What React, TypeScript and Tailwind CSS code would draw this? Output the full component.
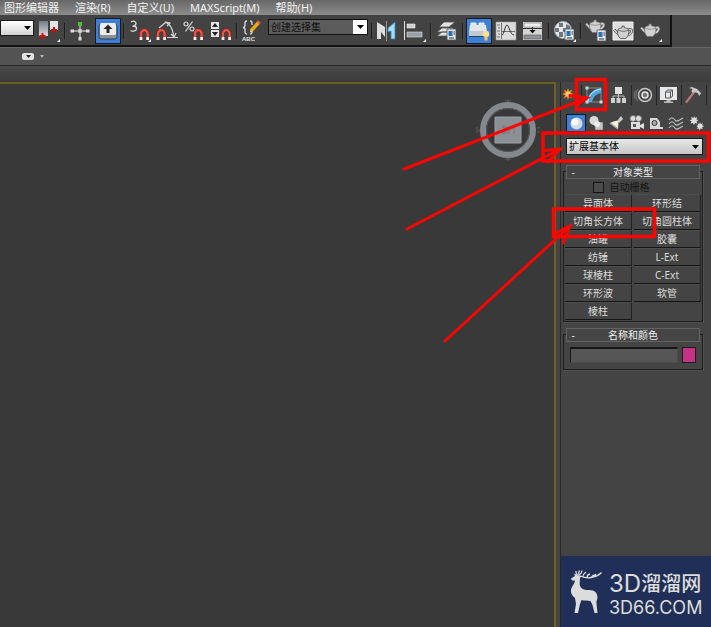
import type { ReactNode } from 'react'

interface ToolProps {
  label: string
  active?: boolean
  flyout?: boolean
  children: ReactNode
}

const menus = ['图形编辑器', '渲染(R)', '自定义(U)', 'MAXScript(M)', '帮助(H)']

const primitives = [
  '异面体',
  '环形结',
  '切角长方体',
  '切角圆柱体',
  '油罐',
  '胶囊',
  '纺锤',
  'L-Ext',
  '球棱柱',
  'C-Ext',
  '环形波',
  '软管',
  '棱柱',
]

function Tool({ label, active, flyout, children }: ToolProps) {
  return (
    <button
      type="button"
      aria-label={label}
      className={`h-6 w-6 shrink-0 ${active ? 'bg-[#3d80d6] outline outline-1 outline-[#171b22]' : ''}`}
    >
      <svg viewBox="0 0 24 24" className="block h-6 w-6" fill="none">
        {children}
        {flyout && <path d="M23 20v3h-3z" fill="#fff" />}
      </svg>
    </button>
  )
}

function Separator() {
  return <span className="h-4 w-[2px] shrink-0 border-l border-[#1c1c1c] bg-[#4c4c4c]" />
}

function Magnet({ x, y }: { x: number; y: number }) {
  return (
    <g transform={`translate(${x} ${y})`}>
      <path d="M1 12V5.500a3.300 3.300 0 0 1 6.600 0V12" stroke="#8a1d17" strokeWidth="3.400" />
      <path d="M1 9V5.500a3.300 3.300 0 0 1 6.600 0V9" stroke="#e8564c" strokeWidth="2.200" />
      <path d="M1 9v3M7.600 9v3" stroke="#f4f4f4" strokeWidth="2.800" />
    </g>
  )
}

function Teapot({ x, y, fill = '#d2d2d2', line = '#777' }: { x: number; y: number; fill?: string; line?: string }) {
  return (
    <g transform={`translate(${x} ${y}) scale(1.120)`}>
      <path d="M4.500 8 1 4.200M13.500 4.500c4-2 4.500 2 0 4.500" stroke={line} strokeWidth="2.400" />
      <path d="M4.500 8 1 4.200M13.500 4.500c4-2 4.500 2 0 4.500" stroke={fill} strokeWidth="1.300" />
      <path
        d="M4.500 3.800C6 2.800 7.300 2.600 8 2.500V1h2v1.500c1.500.1 3 .6 4 1.500.8 3.300-.5 6-2.500 8h-5C4.300 10 3.500 7 4.500 3.800z"
        fill={fill}
        stroke={line}
        strokeWidth=".7"
      />
      <path d="M5 4.800c2.500 1 6 1 8.500 0" stroke={line} strokeWidth=".6" />
    </g>
  )
}

function DialogBadge({ x, y }: { x: number; y: number }) {
  return (
    <g transform={`translate(${x} ${y})`}>
      <path d="M0 0h9v11H0z" fill="#e6e8ea" stroke="#4d5259" strokeWidth=".8" />
      <path d="M1.500 2h4v5h-4z" fill="#2870b8" />
      <path d="M6.500 3h1.500M6.500 5h1.500M2 9h5" stroke="#333" />
    </g>
  )
}

function MainToolbar() {
  return (
    <div className="flex h-8 items-start bg-[#484848]">
      <div className="flex h-8 items-center gap-[3px] border-r-2 border-b-2 border-[#121212] bg-[#434343] pt-0.5 pr-[7px]">
        <button
          type="button"
          aria-label="参考坐标系"
          className="mb-1.5 flex h-4 w-[34px] shrink-0 items-center justify-end border border-[#1b1b1b] bg-linear-to-b from-white to-[#d4d4d4] pr-0.5"
        >
          <svg viewBox="0 0 7 4" className="h-1 w-[7px]">
            <path d="M0 0h7L3.500 4z" fill="#000" />
          </svg>
        </button>
        <Tool label="使用轴点中心" flyout>
          <path d="M2 2h9v15H2z" fill="url(#pivot)" />
          <path d="M13 2h8v9h-8z" fill="#e4e4e6" />
          <path d="M5.500 14v6M2.500 17h6M17 8v6M14 11h6" stroke="#d40d0d" strokeWidth="2" />
          <defs>
            <linearGradient id="pivot" x1="0" y1="0" x2="0" y2="1">
              <stop stopColor="#767b84" />
              <stop offset="1" stopColor="#d9dbe0" />
            </linearGradient>
          </defs>
        </Tool>
        <Separator />
        <Tool label="选择并操纵">
          <path d="M11 5v14M3 12h17" stroke="#b9b9b9" strokeWidth="1.500" />
          <path d="M1.500 10.500h3.500v3H1.500zM17 10.500h3.500v3H17zM9.500 18h3v3.500h-3z" fill="#ddd" />
          <path d="M9 10h4v4H9z" fill="#e8e8e8" opacity=".6" />
          <path d="M9 3h4v4H9z" fill="#47c02c" />
        </Tool>
        <Tool label="键盘快捷键覆盖切换" active>
          <rect x="3" y="5" width="18" height="15" rx="2" fill="#8d9095" stroke="#2d3c52" />
          <rect x="4" y="4" width="16" height="12" rx="1.500" fill="#ececec" />
          <path d="M12 5.500 7.500 10h3v4h3v-4h3z" fill="#262626" />
        </Tool>
        <Separator />
        <Tool label="捕捉开关" flyout>
          <path
            d="M3 3c2-1.300 5-1 5 1.300S6 7 4.500 7C6 7 8.500 7 8.500 9.500S5 13 2.500 11.500"
            stroke="#dedede"
            strokeWidth="1.300"
          />
          <Magnet x={12} y={9} />
        </Tool>
        <Tool label="角度捕捉切换">
          <path
            d="M4 9 11 3M10 3c5 2 8 7 8.500 14M12 18.500h11M11 3l4 1-3 3M16 15l3 3 2-4"
            stroke="#d5d5d5"
            strokeWidth="1.200"
          />
          <Magnet x={2} y={9} />
        </Tool>
        <Tool label="百分比捕捉切换">
          <circle cx="4" cy="5" r="2" stroke="#ddd" strokeWidth="1.200" />
          <circle cx="10" cy="10" r="2" stroke="#ddd" strokeWidth="1.200" />
          <path d="M10.500 2.500 3.500 12.500" stroke="#ddd" strokeWidth="1.200" />
          <Magnet x={12} y={9} />
        </Tool>
        <Tool label="微调器捕捉切换">
          <path d="M2 3h8v7H2zM2 11h8v7H2z" fill="#e6e6e6" />
          <path d="m6 4 3 4H3zM6 17l3-4H3z" fill="#222" />
          <Magnet x={13} y={9} />
        </Tool>
        <Separator />
        <Tool label="编辑命名选择集">
          <path
            d="M6 2C3.500 2 4 4 4 6s-1 2.500-2 2.500C3 8.500 4 9 4 11s-.5 4 2 4M9 2c2.500 0 2 2 2 4M11 11c0 2 .5 4-2 4"
            stroke="#d8d8d8"
            strokeWidth="1.300"
          />
          <path d="m10 12 8-9" stroke="#e9a91c" strokeWidth="3.500" />
          <path d="m9 13.500 2.500-.7-1.800-1.700z" fill="#f5e7c8" />
          <path d="m17 4 1.500-1.600" stroke="#e7503a" strokeWidth="3.500" />
          <text x="1" y="22" fill="#e4e4e4" fontSize="6" fontWeight="bold" fontFamily="Liberation Sans, sans-serif">
            ABC
          </text>
        </Tool>
        <div className="mb-2 flex h-4 w-[100px] shrink-0 border border-[#111] bg-[#5c5c5c]">
          <input
            aria-label="命名选择集"
            defaultValue="创建选择集"
            className="w-0 flex-1 pl-0.5 text-[10px] leading-3 text-[#101010] outline-none"
          />
          <button type="button" aria-label="展开" className="flex w-[14px] items-center justify-center bg-white">
            <svg viewBox="0 0 7 4" className="h-1 w-[7px]">
              <path d="M0 0h7L3.500 4z" fill="#000" />
            </svg>
          </button>
        </div>
        <Separator />
        <Tool label="镜像">
          <path d="M1 3v17h4v-7l4 5V8L1 3z" fill="#dedede" />
          <path d="M10.500 2v20" stroke="#999" />
          <path d="M19 3v17h-4v-8l-3 1V9z" fill="#a5ddf5" stroke="#2d86b8" strokeWidth=".8" />
        </Tool>
        <Tool label="对齐" flyout>
          <path d="M1.500 2v19" stroke="#e0e0e0" />
          <path d="M4 5h8v4H4z" fill="#cfcfd2" stroke="#eee" strokeWidth=".6" />
          <path d="M4 13h15v5H4z" fill="#9b9ea4" stroke="#ddd" strokeWidth=".6" />
        </Tool>
        <Separator />
        <Tool label="管理层">
          <path
            d="m2 17 5-4h12l-5 4zM2 13l5-4h12l-5 4zM4 8l5-5h11l-6 5z"
            fill="#e2e2e2"
            stroke="#555"
            strokeWidth=".8"
          />
          <DialogBadge x={12} y={10} />
        </Tool>
        <Separator />
        <Tool label="石墨建模工具" active>
          <path d="M4 6V4h5v2M12 6V4h5v2" fill="#dfe3e8" stroke="#f0f3f6" />
          <path d="M3 6h16l1 7H2z" fill="#e3e6ea" />
          <path d="M2 12h18v5H2z" fill="#c3c9d1" />
          <path d="M2 17.500h16" stroke="#2b4363" />
          <circle cx="19" cy="15" r="3.200" fill="#ffe08a" />
          <path d="M17.500 17.500h3v4h-3z" fill="#f0c766" />
        </Tool>
        <Tool label="曲线编辑器">
          <path d="M2 3h20v18H2z" fill="#dcdcdc" stroke="#9a9a9a" strokeWidth=".6" />
          <path d="M7.500 4v16M3 6h3M4 9h2M3 12h3M4 15h2M3 18h3M8 12.500h13" stroke="#555" strokeWidth=".8" />
          <path d="M8 16c2 0 3-10 5-10s3 10 7 10" stroke="#333" />
        </Tool>
        <Tool label="图解视图">
          <path d="M2 3h19v18H2z" fill="#d4d4d4" />
          <path d="M3 4h17v4H3z" fill="#f0f0f0" stroke="#777" strokeWidth=".6" />
          <path d="M3 16h17v4H3z" fill="#8f9296" stroke="#555" strokeWidth=".6" />
          <path d="M2 9.500h19M11.500 8v4" stroke="#333" />
          <path d="m8.500 11 3 3.500 3-3.500z" fill="#111" />
        </Tool>
        <Separator />
        <Tool label="材质编辑器" flyout>
          <circle cx="10" cy="11" r="8.500" fill="#e4e7e8" />
          <path
            d="M6 4h4v4H6zM13 5l4 2v3h-4zM2 9h4v4H2zM10 9h3v4h-3zM6 13h4v5H6zM13 13h4v3h-4z"
            fill="#6d777d"
          />
          <circle cx="10" cy="11" r="8.500" stroke="#9ea8ad" />
          <DialogBadge x={12} y={10} />
        </Tool>
        <Separator />
        <Tool label="渲染设置">
          <Teapot x={0} y={0} />
          <DialogBadge x={12} y={11} />
        </Tool>
        <Tool label="渲染帧窗口">
          <path d="M1 3h20v18H1z" fill="#dedede" stroke="#f1f1f1" />
          <Teapot x={1} y={6} fill="#d0d0d0" line="#444" />
        </Tool>
        <Tool label="渲染产品" flyout>
          <Teapot x={1} y={4} />
        </Tool>
      </div>
    </div>
  )
}

function CommandTabs() {
  const tabs = [
    {
      label: '创建',
      art: (
        <>
          <path
            d="m9 3 1.200 3.200 3.200-1.600-1.600 3.200L15 9l-3.200 1.200 1.600 3.200-3.200-1.600L9 15l-1.200-3.200-3.200 1.600 1.600-3.200L3 9l3.200-1.200-1.600-3.200 3.200 1.600z"
            fill="#f08a1d"
          />
          <circle cx="9" cy="9" r="2.500" fill="#ffc96b" />
        </>
      ),
    },
    {
      label: '修改',
      art: (
        <>
          <path d="M3 3h14v14H3z" stroke="#8b8b8b" />
          <path d="M3 17C4 9 9 4 17 3v5c-5 1-8 4-9 9z" fill="#4da7e6" />
          <path d="M4 16C5 9 10 5 17 4" stroke="#d3efff" />
          <path d="M1.500 1.500h3v3h-3zM15.500 15.500h3v3h-3zM1.500 15.500h3v3h-3z" fill="#d5d5d5" />
        </>
      ),
    },
    {
      label: '层次',
      art: (
        <>
          <path d="M6 2h7v7H6z" fill="#e1e1e1" />
          <path d="M9.500 9v6M4 14v-3h11v3" stroke="#bdbdbd" />
          <path d="M2 13h4v5H2zM7.500 13h4v5h-4zM13 13h4v5h-4z" fill="#cfcfcf" />
        </>
      ),
    },
    {
      label: '运动',
      art: (
        <>
          <circle cx="11" cy="10" r="6.500" stroke="#c4c4c4" strokeWidth="1.500" />
          <circle cx="11" cy="10" r="3" fill="#777" stroke="#e4e4e4" strokeWidth="1.500" />
          <path d="M3.500 4c-2 4-2 8 0 12M1 6c-1 3-1 5 0 8" stroke="#777" />
        </>
      ),
    },
    {
      label: '显示',
      art: (
        <>
          <path d="M1 2h17v13H1z" fill="#e6e8ea" />
          <path d="M6.500 7 8.500 5h5v6l-2 2h-5zM6.500 7h5v6M11.500 7l2-2" stroke="#555" />
          <path d="M7.500 15h4v1.500h-4zM5 16.500h9V18H5z" fill="#bbb" />
        </>
      ),
    },
    {
      label: '工具',
      art: (
        <>
          <path d="M2 17.500 11 6" stroke="#bb7870" strokeWidth="2.200" />
          <path d="m5 3 3-1 5 2 4 4-1.500 3-2-3-3-1-2 1-1-2 1-2z" fill="#c5c7ca" />
        </>
      ),
    },
  ]

  return (
    <div className="-ml-1 flex h-5">
      {tabs.map((tab) => (
        <button
          key={tab.label}
          type="button"
          aria-label={tab.label}
          className="flex w-[25px] items-center justify-center border-r border-[#242424]"
        >
          <svg viewBox="0 0 20 20" className="h-5 w-5" fill="none">
            {tab.art}
          </svg>
        </button>
      ))}
    </div>
  )
}

function CategoryRow() {
  const categories = [
    {
      label: '几何体',
      art: (
        <>
          <circle cx="9.500" cy="9.500" r="6" fill="#d3dae3" />
          <circle cx="8" cy="8" r="3.500" fill="#fff" />
        </>
      ),
    },
    {
      label: '图形',
      art: (
        <>
          <circle cx="7" cy="6.500" r="4.500" fill="#dadada" />
          <path d="M8 8h8v8H8z" fill="#c6c6c6" stroke="#555" strokeWidth=".6" />
          <circle cx="10" cy="10" r="3" fill="#efefef" />
        </>
      ),
    },
    {
      label: '灯光',
      art: (
        <>
          <path d="m14 2 2 3-4 4-2-2z" fill="#ccc" />
          <path d="M3 9c3-1 6-3 8-2 1 2 0 5 0 8z" fill="#f7f1d8" />
          <path d="m3 9 8 6" stroke="#aaa" strokeWidth="1.500" />
        </>
      ),
    },
    {
      label: '摄影机',
      art: (
        <>
          <circle cx="6" cy="4.500" r="3" fill="#ddd" stroke="#777" />
          <circle cx="11.500" cy="4.500" r="3" fill="#ddd" stroke="#777" />
          <path d="M4 8h9v3l4-2v6l-4-2v2H4z" fill="#dedede" />
          <path d="M6 10h3v3H6z" fill="#555" />
        </>
      ),
    },
    {
      label: '辅助对象',
      art: (
        <>
          <path d="M3 4h7l3 4v7H3z" fill="#d8d8d8" />
          <circle cx="7.500" cy="9" r="2.500" fill="#aaa" stroke="#333" />
          <path d="M12 14h4" stroke="#d8d8d8" strokeWidth="2" />
        </>
      ),
    },
    {
      label: '空间扭曲',
      art: (
        <path
          d="M2 6c2-3 4-3 6 0s4 0 8-2M2 10c2-3 4-3 6 0s4 0 8-2M2 14c2-3 4-3 6 0s4 0 8-2"
          stroke="#b8c0c0"
          strokeWidth="1.200"
        />
      ),
    },
    {
      label: '系统',
      art: (
        <path
          d="m7 2 1 2 2-1-.5 2.500 2 .5-2 1.500 1 2L8 9l-1 2-1-2-2.500.5 1-2L2.500 6 5 5.500 4 3l2.500 1zM13 8l.8 2 2-.7-.7 2 2 1-2 1 .5 2-2-.7-1 2-.7-2-2 .3 1-2-1.700-1 2-.8-.5-1.800 1.700.7z"
          fill="#ddd"
        />
      ),
    },
  ]

  return (
    <div className="flex h-[18px] pl-[5px]">
      {categories.map((item, i) => (
        <button
          key={item.label}
          type="button"
          aria-label={item.label}
          className={`flex w-5 items-center justify-center ${i === 0 ? 'border border-[#10151d] bg-[#3d7fd3]' : ''}`}
        >
          <svg viewBox="0 0 18 18" className="h-[18px] w-[18px] shrink-0" fill="none">
            {item.art}
          </svg>
        </button>
      ))}
    </div>
  )
}

function Rollout({ title, children }: { title: string; children: ReactNode }) {
  return (
    <section className="mr-2 ml-[2px] flex flex-col">
      <button
        type="button"
        className="z-10 mx-[3px] flex h-[14px] items-center border border-[#626262] bg-[#454545] pr-2 pl-1 text-[#f0f0f0]"
      >
        <span className="w-1">-</span>
        <span className="flex-1 text-center">{title}</span>
      </button>
      <div className="-mt-2 border border-[#1c1c1c] pt-2 shadow-[1px_1px_0_#525252]">{children}</div>
    </section>
  )
}

function Deer() {
  return (
    <svg viewBox="0 0 34 46" className="h-[46px] w-[34px] shrink-0" fill="#dcdcdc">
      <path d="M2 9.500 6 7 5 4.500 9 6.500 12.500 7 11 9c0 4-1 7 1 9.500 1.500 2 4 2.500 8 2.500 6 0 8.500 3 8.500 7.500 0 2-1.500 3.500-1 6l1 9.500h-3l-2-8-2-4c-3-.5-6 0-9-1l-1.500 4L9 44H5.500L7 35 6 29c-3-2-4.500-5-4-8.500C3 17 5.500 15 6 11.500H3z" />
      <path
        d="M9 7C7.500 5.500 6.500 4.500 7 2M10 6.500C10 4.500 9 3.500 10.500 1.500M10 6.500C12 5 13 4 13 1.500M11 7c4 1.500 7 2.500 11 1.500 4-1 7-1 10.500-5M14 7.500c0-2 1-3 3-4.500M18 8.500c0-2 1-3 3-3.500M22 8.500c1-1.500 2-2.500 4-2.500M25 7.500l2-2.500"
        fill="none"
        stroke="#dcdcdc"
        strokeWidth="1.300"
      />
    </svg>
  )
}

function CommandPanel() {
  return (
    <aside className="flex w-[151px] shrink-0 flex-col border-l border-[#292929] bg-[#444]">
      <div className="pt-[3px]">
        <CommandTabs />
      </div>
      <div className="pt-[9px]">
        <CategoryRow />
      </div>
      <div className="mt-1.5 mr-2 ml-[5px]">
        <select
          aria-label="几何体类别"
          className="h-[17px] w-full appearance-none border border-[#161616] bg-linear-to-b from-[#e8e8e8] to-[#c6c6c6] pl-0.5 leading-[15px] text-black"
        >
          <option>扩展基本体</option>
        </select>
        <svg viewBox="0 0 7 4" className="pointer-events-none relative -mt-2.5 mr-1 mb-1.5 ml-auto h-1 w-[7px]">
          <path d="M0 0h7L3.500 4z" fill="#000" />
        </svg>
      </div>

      <div className="mt-2.5 flex flex-col gap-1.5">
        <Rollout title="对象类型">
          <label className="flex h-[14px] items-center justify-center gap-1.5 pr-6 text-[#151515]">
            <input
              type="checkbox"
              className="h-[11px] w-[11px] appearance-none border border-[#151515] bg-[#4b4b4b]"
            />
            自动栅格
          </label>
          <div className="grid grid-cols-2 gap-x-0.5 px-px pb-px">
            {primitives.map((name) => (
              <button
                key={name}
                type="button"
                className="h-[18px] border-t border-r border-b border-t-[#4c4c4c] border-r-[#222] border-b-[#161616] leading-4 text-[#dcdcdc]"
              >
                {name}
              </button>
            ))}
          </div>
        </Rollout>

        <Rollout title="名称和颜色">
          <div className="flex gap-1 px-1.5 pt-1 pb-1.5">
            <input
              aria-label="名称"
              className="h-4 w-0 flex-1 border border-t-2 border-[#161616] border-r-[#4c4c4c] border-b-[#4c4c4c] bg-[#565656] text-white outline-none"
            />
            <button
              type="button"
              aria-label="对象颜色"
              className="h-4 w-[14px] border border-[#1c1c1c] bg-[#c63384]"
            />
          </div>
        </Rollout>
      </div>

      <div className="mt-auto flex h-[71px] items-center gap-1.5 bg-[#202f57] pl-2 text-[#dcdcdc]">
        <Deer />
        <div className="flex flex-col pt-1 font-['Inter','Noto_Sans_CJK_SC',sans-serif] whitespace-nowrap">
          <div className="flex items-center leading-7">
            <span className="text-[24px] leading-7">3D</span>
            <span className="text-[20px] leading-7 font-medium">溜溜网</span>
          </div>
          <div className="text-[18px] leading-5">3D66.COM</div>
        </div>
      </div>
    </aside>
  )
}

function ViewCube() {
  return (
    <svg viewBox="0 0 64 64" className="h-16 w-16" fill="none">
      <circle cx="32" cy="32" r="25" stroke="#85898e" strokeWidth="6" />
      <circle cx="32" cy="32" r="21.500" stroke="#565a5e" />
      <path d="M19 19h26v26H19z" fill="#8b9095" stroke="#9ba0a4" />
      <path d="M26 29h5v6h-5M33 28v8M33 30h5v6M28 27v10" stroke="#777b80" />
      <path d="M29 3h6M32 1v3M29 61h6M32 60v3M1 29v6M3 31v3M61 30h3M61 34h3" stroke="#5c5c5c" />
    </svg>
  )
}

// Red callouts drawn over the create panel
function Callouts() {
  return (
    <svg
      viewBox="391 70 320 280"
      className="pointer-events-none absolute top-[70px] right-0 z-20 h-[280px] w-80"
      fill="none"
      stroke="#fa0500"
      strokeWidth="3.500"
    >
      <path d="M576.500 79.500h29v30h-29zM543 133h165.500v28H543zM553.500 209h101v27.500h-101z" />
      <g strokeLinecap="round" strokeWidth="3">
        <path d="m404 169 183-71M570 95.500l17 2.500-10 7" />
        <path d="m407 229 153-80M544 150.500l16-1.500-12 13" />
        <path d="m445 341 125-115M554 234l16-8-7 17" />
      </g>
    </svg>
  )
}

export default function App() {
  return (
    <div className="relative flex min-h-screen flex-col overflow-hidden bg-[#444] font-['Noto_Sans','Noto_Sans_CJK_SC',sans-serif] text-[10px]">
      <nav className="flex h-[15px] items-start gap-4 bg-linear-to-b from-[#676767] to-[#8d8d8d] pl-1 text-[11px] text-[#f2f2f2]">
        {menus.map((menu) => (
          <button key={menu} type="button" className="shrink-0 leading-[15px]">
            {menu}
          </button>
        ))}
      </nav>
      <MainToolbar />
      <div className="flex h-[19px] items-center gap-1.5 border-t border-b border-t-[#666] border-b-[#272727] bg-[#535353] pl-[22px]">
        <button
          type="button"
          aria-label="最小化功能区"
          className="flex h-[7px] w-3 items-center justify-center rounded-xs bg-[#e2e2e2]"
        >
          <svg viewBox="0 0 5 3" className="h-[3px] w-[5px]">
            <path d="M0 0h5L2.500 3z" fill="#222" />
          </svg>
        </button>
        <svg viewBox="0 0 5 3" className="h-[3px] w-[5px]">
          <path d="M0 0h4L2 3z" fill="#b5b5b5" />
        </svg>
      </div>
      <div className="h-4 shrink-0 bg-linear-to-b from-[#4a4a4a] to-[#3b3b3b]" />
      <main className="flex flex-1">
        <div className="mr-1 flex flex-1 items-start justify-end border-t-2 border-r-2 border-[#6c6023] bg-[#393939] pt-[14px] pr-[14px]">
          <ViewCube />
        </div>
        <CommandPanel />
      </main>
      <Callouts />
    </div>
  )
}
